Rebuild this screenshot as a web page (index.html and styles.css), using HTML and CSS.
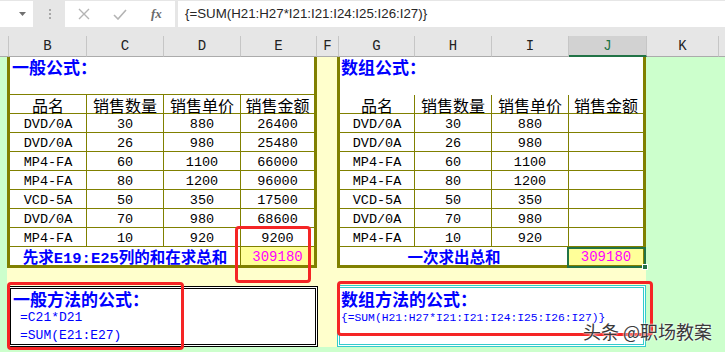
FILE: index.html
```html
<!DOCTYPE html>
<html>
<head>
<meta charset="utf-8">
<link rel="stylesheet" href="styles.css">
</head>
<body>
<div class="fbar">
  <div class="namebox"><svg class="dd" width="7" height="4" viewBox="0 0 7 4"><path d="M0 0h7L3.5 4z" fill="#707070"/></svg></div>
  <div class="grip"><svg width="2" height="10" viewBox="0 0 2 10"><rect x="0" y="0" width="2" height="2" fill="#a8a8a8"/><rect x="0" y="4" width="2" height="2" fill="#a8a8a8"/><rect x="0" y="8" width="2" height="2" fill="#a8a8a8"/></svg></div>
  <div class="fbtns">
    <svg class="ic-x" width="12" height="12" viewBox="0 0 12 12"><path d="M1 1L11 11M11 1L1 11" stroke="#b4b4b4" stroke-width="1.4" fill="none"/></svg>
    <svg class="ic-ok" width="14" height="11" viewBox="0 0 14 11"><path d="M1 6L5 10L13 1" stroke="#b4b4b4" stroke-width="1.6" fill="none"/></svg>
    <span class="fx">fx</span>
  </div>
  <div class="finput">{=SUM(H21:H27*I21:I21:I24:I25:I26:I27)}</div>
</div>

<div class="colhdr">
  <div class="ch"></div>
  <div class="ch">B</div>
  <div class="ch">C</div>
  <div class="ch">D</div>
  <div class="ch">E</div>
  <div class="ch">F</div>
  <div class="ch">G</div>
  <div class="ch">H</div>
  <div class="ch">I</div>
  <div class="ch sel">J</div>
  <div class="ch">K</div>
  <div class="ch last"></div>
</div>

<div class="sheet">
  <div class="colA"></div>
  <div class="mid">
    <div class="tables">
      <div class="tbl tleft">
        <div class="c title">一般公式：</div>
        <div class="c hd">品名</div><div class="c hd">销售数量</div><div class="c hd">销售单价</div><div class="c hd end">销售金额</div>
        <div class="c">DVD/0A</div><div class="c">30</div><div class="c">880</div><div class="c end">26400</div>
        <div class="c">DVD/0A</div><div class="c">26</div><div class="c">980</div><div class="c end">25480</div>
        <div class="c">MP4-FA</div><div class="c">60</div><div class="c">1100</div><div class="c end">66000</div>
        <div class="c">MP4-FA</div><div class="c">80</div><div class="c">1200</div><div class="c end">96000</div>
        <div class="c">VCD-5A</div><div class="c">50</div><div class="c">350</div><div class="c end">17500</div>
        <div class="c">DVD/0A</div><div class="c">70</div><div class="c">980</div><div class="c end">68600</div>
        <div class="c">MP4-FA</div><div class="c">10</div><div class="c">920</div><div class="c end">9200</div>
        <div class="c tot totlabel">先求E19:E25列的和在求总和</div><div class="c tot end sum">309180</div>
      </div>
      <div class="tbl tright">
        <div class="c title open">数组公式：</div>
        <div class="c hd">品名</div><div class="c hd">销售数量</div><div class="c hd">销售单价</div><div class="c hd end">销售金额</div>
        <div class="c">DVD/0A</div><div class="c">30</div><div class="c">880</div><div class="c end"></div>
        <div class="c">DVD/0A</div><div class="c">26</div><div class="c">980</div><div class="c end"></div>
        <div class="c">MP4-FA</div><div class="c">60</div><div class="c">1100</div><div class="c end"></div>
        <div class="c">MP4-FA</div><div class="c">80</div><div class="c">1200</div><div class="c end"></div>
        <div class="c">VCD-5A</div><div class="c">50</div><div class="c">350</div><div class="c end"></div>
        <div class="c">DVD/0A</div><div class="c">70</div><div class="c">980</div><div class="c end"></div>
        <div class="c">MP4-FA</div><div class="c">10</div><div class="c">920</div><div class="c end"></div>
        <div class="c tot totlabel center">一次求出总和</div><div class="c tot end sum">309180</div>
      </div>
    </div>
    <div class="boxes">
      <div class="box bblack">
        <div class="btitle">一般方法的公式：</div>
        <div class="bf">=C21*D21</div>
        <div class="bf last">=SUM(E21:E27)</div>
      </div>
      <div class="box bcyan">
        <div class="btitle">数组方法的公式：</div>
        <div class="bf small">{=SUM(H21:H27*I21:I21:I24:I25:I26:I27)}</div>
      </div>
    </div>
  </div>
  <div class="rest"></div>

  <div class="selbox"></div>
  <div class="handle"></div>
  <div class="red r1"></div>
  <div class="red r2"></div>
  <div class="red r3"></div>
</div>

<div class="watermark">头条 @职场教案</div>
</body>
</html>
```

FILE: styles.css
```css
* { box-sizing: border-box; }

body {
  margin: 0;
  width: 725px;
  height: 352px;
  overflow: hidden;
  background: #ccffcc;
  font-family: "Liberation Mono", "Noto Sans CJK SC", monospace;
  position: relative;
}

/* formula bar */
.fbar {
  display: flex;
  height: 28px;
  padding-top: 1px;
  background: #e6e6e6;
}
.namebox {
  width: 33px;
  height: 26px;
  background: #fff;
  display: flex;
  align-items: center;
  justify-content: flex-end;
  padding-right: 7px;
}
.grip {
  width: 32px;
  height: 26px;
  display: flex;
  align-items: center;
  justify-content: center;
  padding-left: 1px;
}
.fbtns {
  width: 110px;
  height: 26px;
  background: #fff;
  display: flex;
  align-items: center;
  padding-left: 13px;
}
.ic-ok { margin-left: 23px; }
.fx {
  margin-left: 24px;
  font-family: "Liberation Serif", serif;
  font-style: italic;
  font-weight: bold;
  font-size: 13px;
  color: #6a6a6a;
}
.finput {
  flex: 1;
  height: 26px;
  margin-left: 3px;
  background: #fff;
  padding-left: 7px;
  font-family: "Liberation Sans", Arial, sans-serif;
  font-size: 13.3px;
  line-height: 26px;
  color: #262626;
}

/* column header */
.colhdr {
  display: grid;
  grid-template-columns: 9px 78px 77px 77px 76px 22px 76px 77px 77px 78px 72px 1fr;
  height: 29px;
  padding-top: 8px;
  background: #e6e6e6;
}
.ch {
  height: 21px;
  border-right: 1px solid #c6c6c6;
  border-bottom: 1px solid #ababab;
  text-align: center;
  font-size: 14px;
  line-height: 21px;
  color: #222;
}
.ch.last { border-right: 0; }
.ch.sel {
  background: #d2d2d2;
  color: #217346;
  border-bottom: 2px solid #217346;
}

/* sheet */
.sheet {
  position: relative;
  display: flex;
  height: 295px;
}
.colA { width: 7px; }
.mid {
  width: 639px;
  height: 290px;
  background: #ffffcc;
  display: flex;
  flex-direction: column;
}
.rest { flex: 1; }

.tables {
  display: flex;
  gap: 20px;
}
.tbl {
  display: grid;
  grid-template-rows: 38px repeat(8, 19px) 18px;
  border: 3px solid #808000;
  border-top: 0;
  background: #fff;
}
.tleft {
  width: 310px;
  grid-template-columns: 77px 77px 77px 73px;
}
.tright {
  width: 309px;
  grid-template-columns: 75px 77px 77px 74px;
}
.c {
  border-right: 1px solid #808000;
  border-bottom: 1px solid #808000;
  display: flex;
  align-items: center;
  justify-content: center;
  padding-top: 2px;
  font-size: 13.5px;
  color: #000;
  white-space: nowrap;
}
.c.end { border-right: 0; }
.c.title {
  grid-column: 1 / -1;
  border-right: 0;
  align-items: flex-start;
  justify-content: flex-start;
  padding: 0 0 0 2px;
  font-family: "Noto Sans CJK SC", sans-serif;
  font-weight: bold;
  font-size: 17px;
  line-height: 20px;
  color: #0000ff;
}
.c.title.open { border-bottom-color: #fff; padding-left: 1px; }
.c.hd {
  font-family: "Noto Sans CJK SC", sans-serif;
  font-size: 16px;
  line-height: 18px;
  padding-top: 1px;
}
.c.tot { border-bottom: 0; }
.c.totlabel {
  grid-column: 1 / 4;
  font-weight: bold;
  font-size: 15.5px;
  color: #0000ff;
  padding-top: 0;
}
.c.sum {
  background: #ffff99;
  color: #ff00ff;
  font-size: 14px;
}

/* formula boxes */
.boxes {
  display: flex;
  align-items: flex-start;
  margin-top: 17px;
}
.box {
  background: #fff;
  padding: 0 2px;
  overflow: hidden;
}
.bblack {
  width: 310px;
  height: 61px;
  margin-top: 1px;
  margin-left: 1px;
  border: 3px double #000;
}
.bcyan {
  width: 309px;
  height: 62px;
  margin-left: 19px;
  border: 3px double #33cccc;
  padding-left: 1px;
}
.btitle {
  font-family: "Noto Sans CJK SC", sans-serif;
  font-weight: bold;
  font-size: 17px;
  line-height: 19px;
  color: #0000ff;
}
.bcyan .btitle { line-height: 22px; }
.bf {
  padding-left: 7px;
  font-size: 13px;
  line-height: 19px;
  color: #0000ff;
}
.bf.last { line-height: 17px; }
.bf.small {
  padding-left: 0;
  font-size: 11.3px;
  line-height: 16px;
}

/* overlays */
.selbox {
  position: absolute;
  left: 567px;
  top: 190px;
  width: 79px;
  height: 21px;
  border: 2px solid #217346;
}
.handle {
  position: absolute;
  left: 642px;
  top: 207px;
  width: 6px;
  height: 6px;
  background: #217346;
  border: 1px solid #fff;
}
.red {
  position: absolute;
  border: 3px solid #f52525;
  border-radius: 4px;
}
.r1 { left: 235px; top: 169px; width: 76px; height: 57px; }
.r2 { left: 7px; top: 225px; width: 177px; height: 68px; }
.r3 { left: 337px; top: 224px; width: 316px; height: 55px; }

.watermark {
  position: absolute;
  left: 583px;
  top: 320px;
  font-family: "Noto Sans CJK SC", sans-serif;
  font-size: 18px;
  line-height: 22px;
  color: #3a3a3a;
  text-shadow: 0 0 2px #fff, 0 0 2px #fff;
  white-space: nowrap;
}
```
